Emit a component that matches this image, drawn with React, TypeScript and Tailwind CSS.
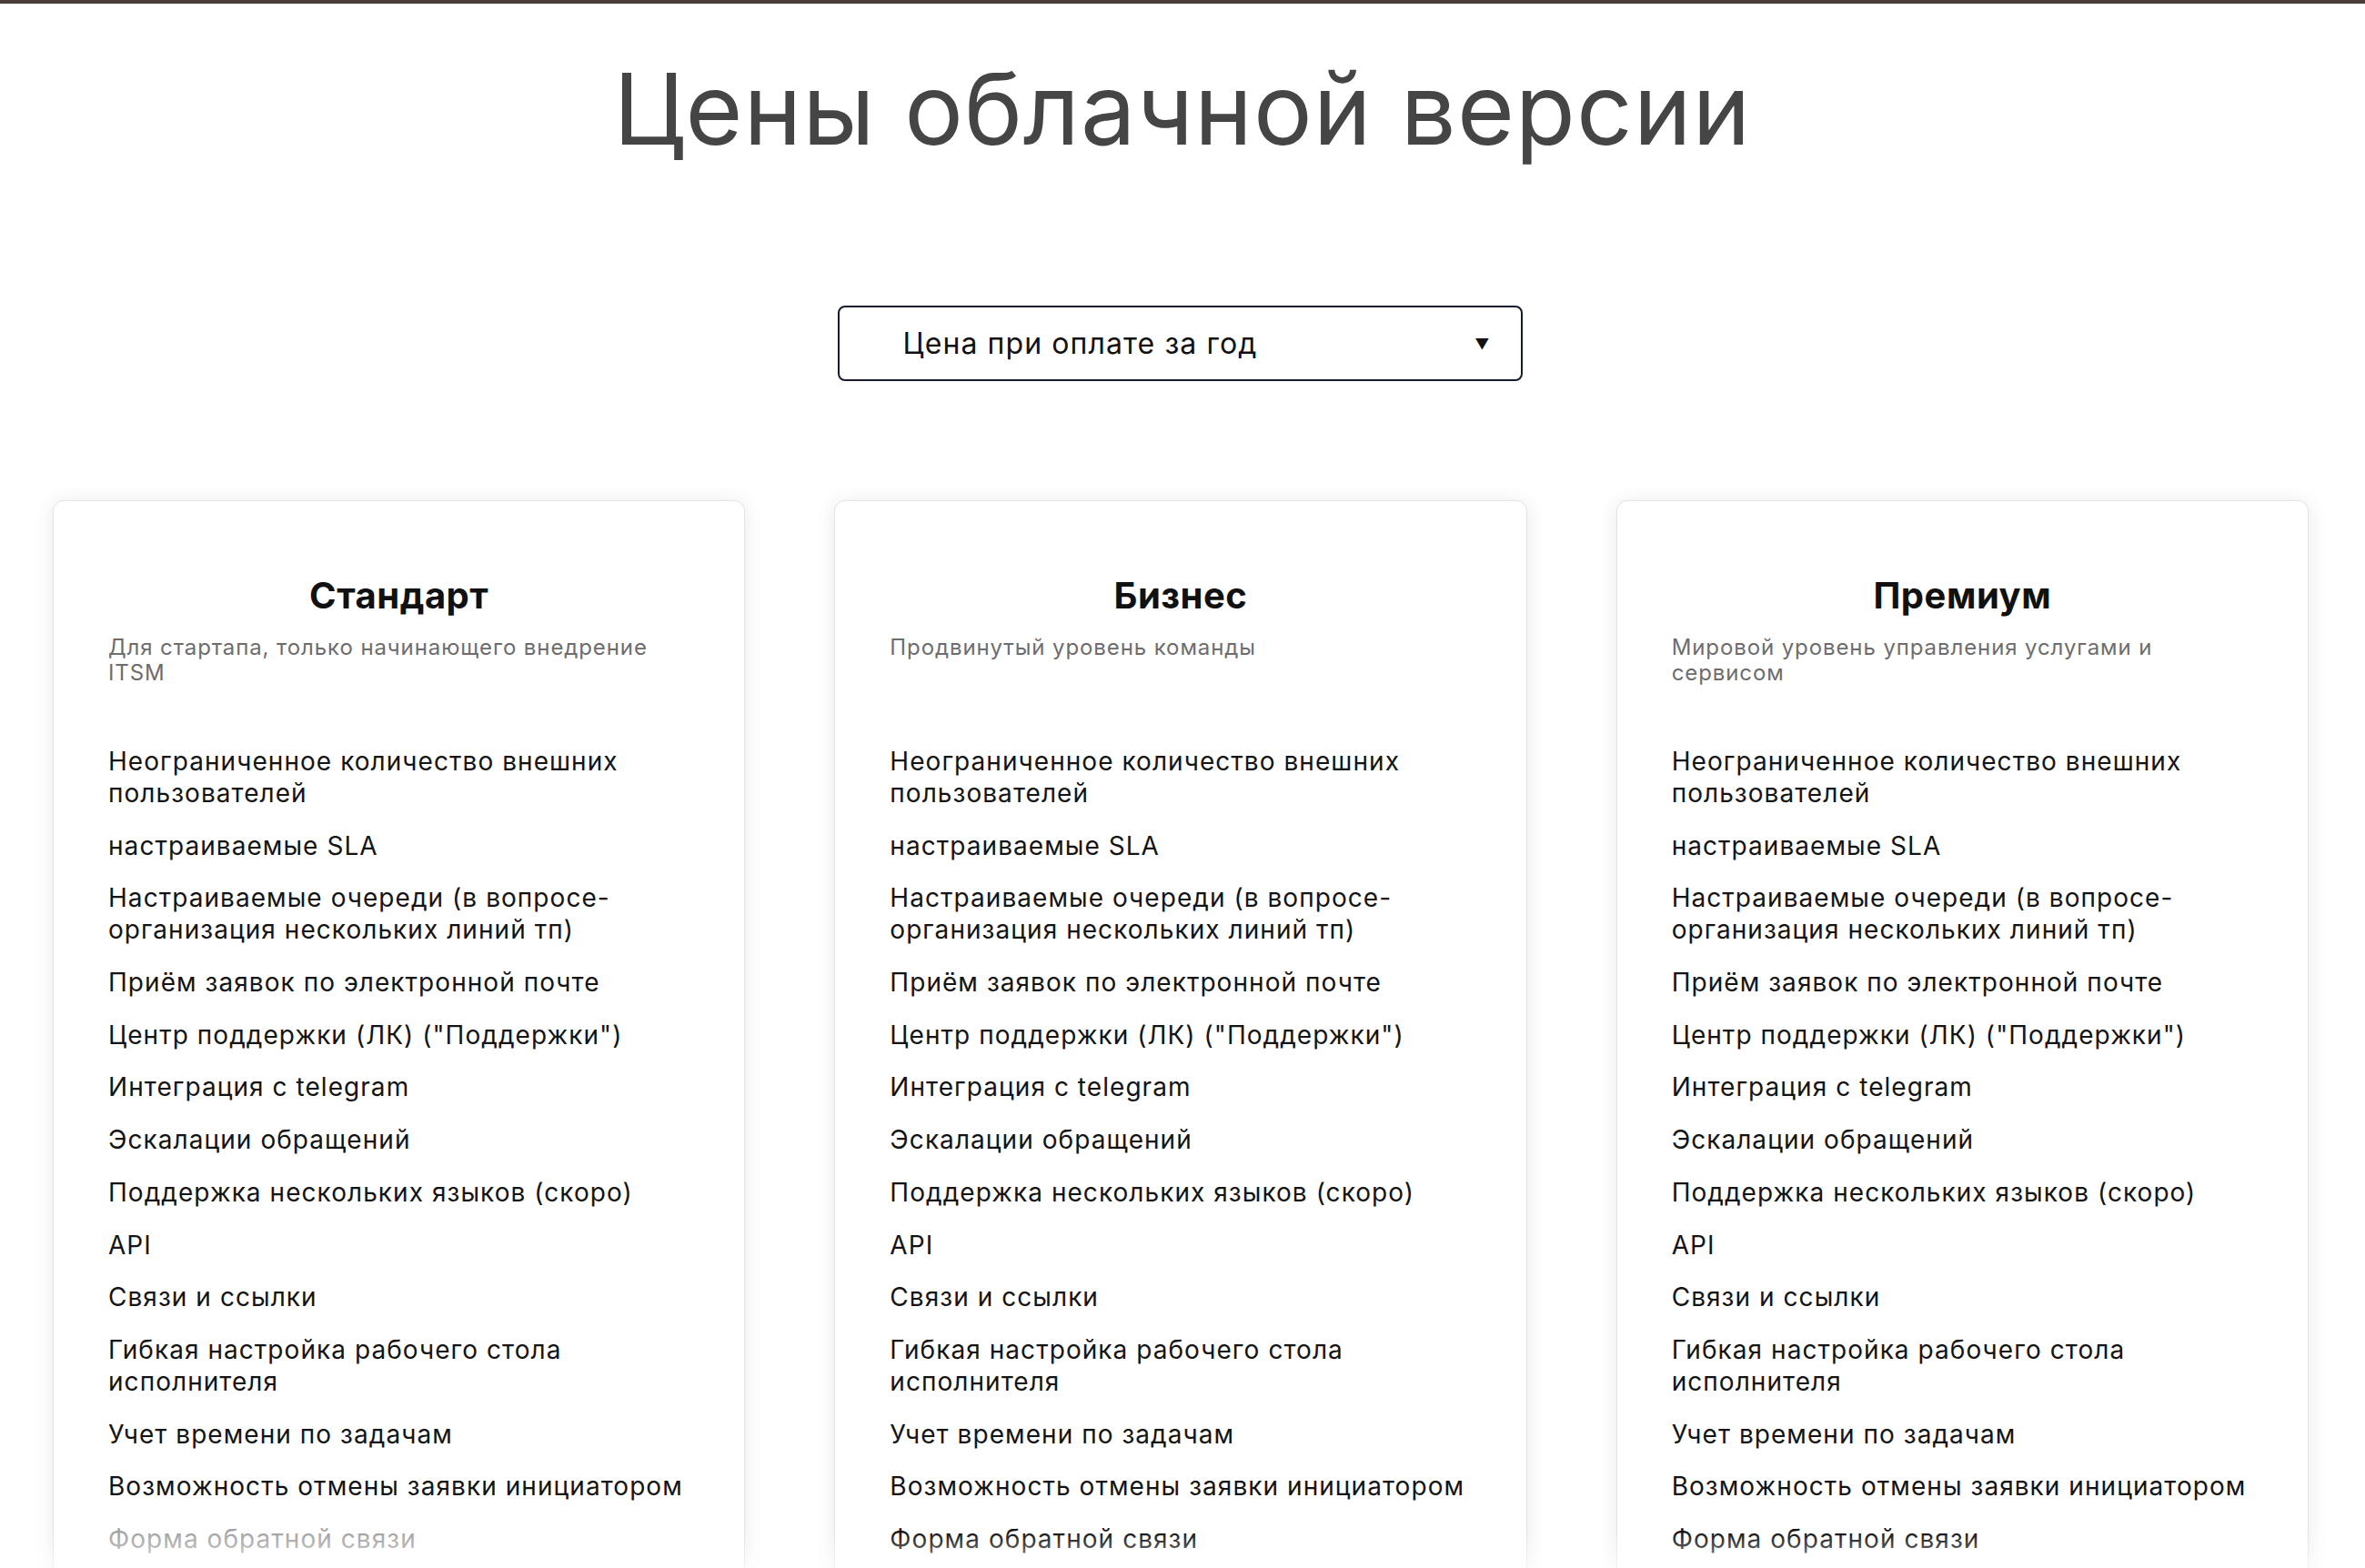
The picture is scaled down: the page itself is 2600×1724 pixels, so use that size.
import React from 'react';

type Plan = {
  name: string;
  description: string;
  disabled: string[];
};

const features = [
  'Неограниченное количество внешних пользователей',
  'настраиваемые SLA',
  'Настраиваемые очереди (в вопросе-организация нескольких линий тп)',
  'Приём заявок по электронной почте',
  'Центр поддержки (ЛК) ("Поддержки")',
  'Интеграция с telegram',
  'Эскалации обращений',
  'Поддержка нескольких языков (скоро)',
  'API',
  'Связи и ссылки',
  'Гибкая настройка рабочего стола исполнителя',
  'Учет времени по задачам',
  'Возможность отмены заявки инициатором',
  'Форма обратной связи',
];

const plans: Plan[] = [
  {
    name: 'Стандарт',
    description: 'Для стартапа, только начинающего внедрение ITSM',
    disabled: ['Форма обратной связи'],
  },
  {
    name: 'Бизнес',
    description: 'Продвинутый уровень команды',
    disabled: [],
  },
  {
    name: 'Премиум',
    description: 'Мировой уровень управления услугами и сервисом',
    disabled: [],
  },
];

const PlanCard: React.FC<{ plan: Plan }> = ({ plan }) => (
  <div className="min-h-[1400px] rounded-[12px] border border-[#e1e3e7] bg-white px-[60px] pt-[80px] shadow-[0_2px_22px_rgba(0,0,0,0.09)]">
    <h2 className="text-center text-[40px] font-bold leading-[48px] tracking-[0.5px] text-[#111]">
      {plan.name}
    </h2>
    <p className="mt-[19px] h-[56px] text-[24px] leading-[28px] tracking-[0.9px] text-[#6d6d6d]">
      {plan.description}
    </p>
    <ul className="mt-[66px] flex flex-col gap-[22.7px]">
      {features.map((f) => (
        <li
          key={f}
          className={`text-[28px] leading-[35px] tracking-[1.05px] ${
            plan.disabled.includes(f) ? 'text-[#a3a3a3]' : 'text-[#141414]'
          }`}
        >
          {f}
        </li>
      ))}
    </ul>
  </div>
);

export default function App() {
  return (
    <div className="relative h-[1724px] overflow-hidden bg-white font-['Inter','Noto_Sans',sans-serif]">
      <div className="h-[4px] bg-[#4a3d37]" />

      <h1 className="mt-[62px] text-center text-[108px] leading-none tracking-[1px] text-[#454545]">
        Цены облачной версии
      </h1>

      {/* селектор периода оплаты */}
      <div className="mt-[162px] flex justify-center">
        <div className="-translate-x-[3px] flex h-[83px] w-[753px] items-center justify-between rounded-[8px] border-2 border-[#151c2c] pl-[70px] pr-[34px] text-[#111]">
          <span className="text-[32px] tracking-[1.1px]">Цена при оплате за год</span>
          <span className="text-[16px]">▼</span>
        </div>
      </div>

      <div className="ml-[58px] mt-[131px] grid w-[2480px] grid-cols-3 gap-[98px]">
        {plans.map((p) => (
          <PlanCard key={p.name} plan={p} />
        ))}
      </div>

      <div className="pointer-events-none absolute inset-x-0 bottom-0 h-[40px] bg-gradient-to-b from-white/0 to-white/60" />
    </div>
  );
}
